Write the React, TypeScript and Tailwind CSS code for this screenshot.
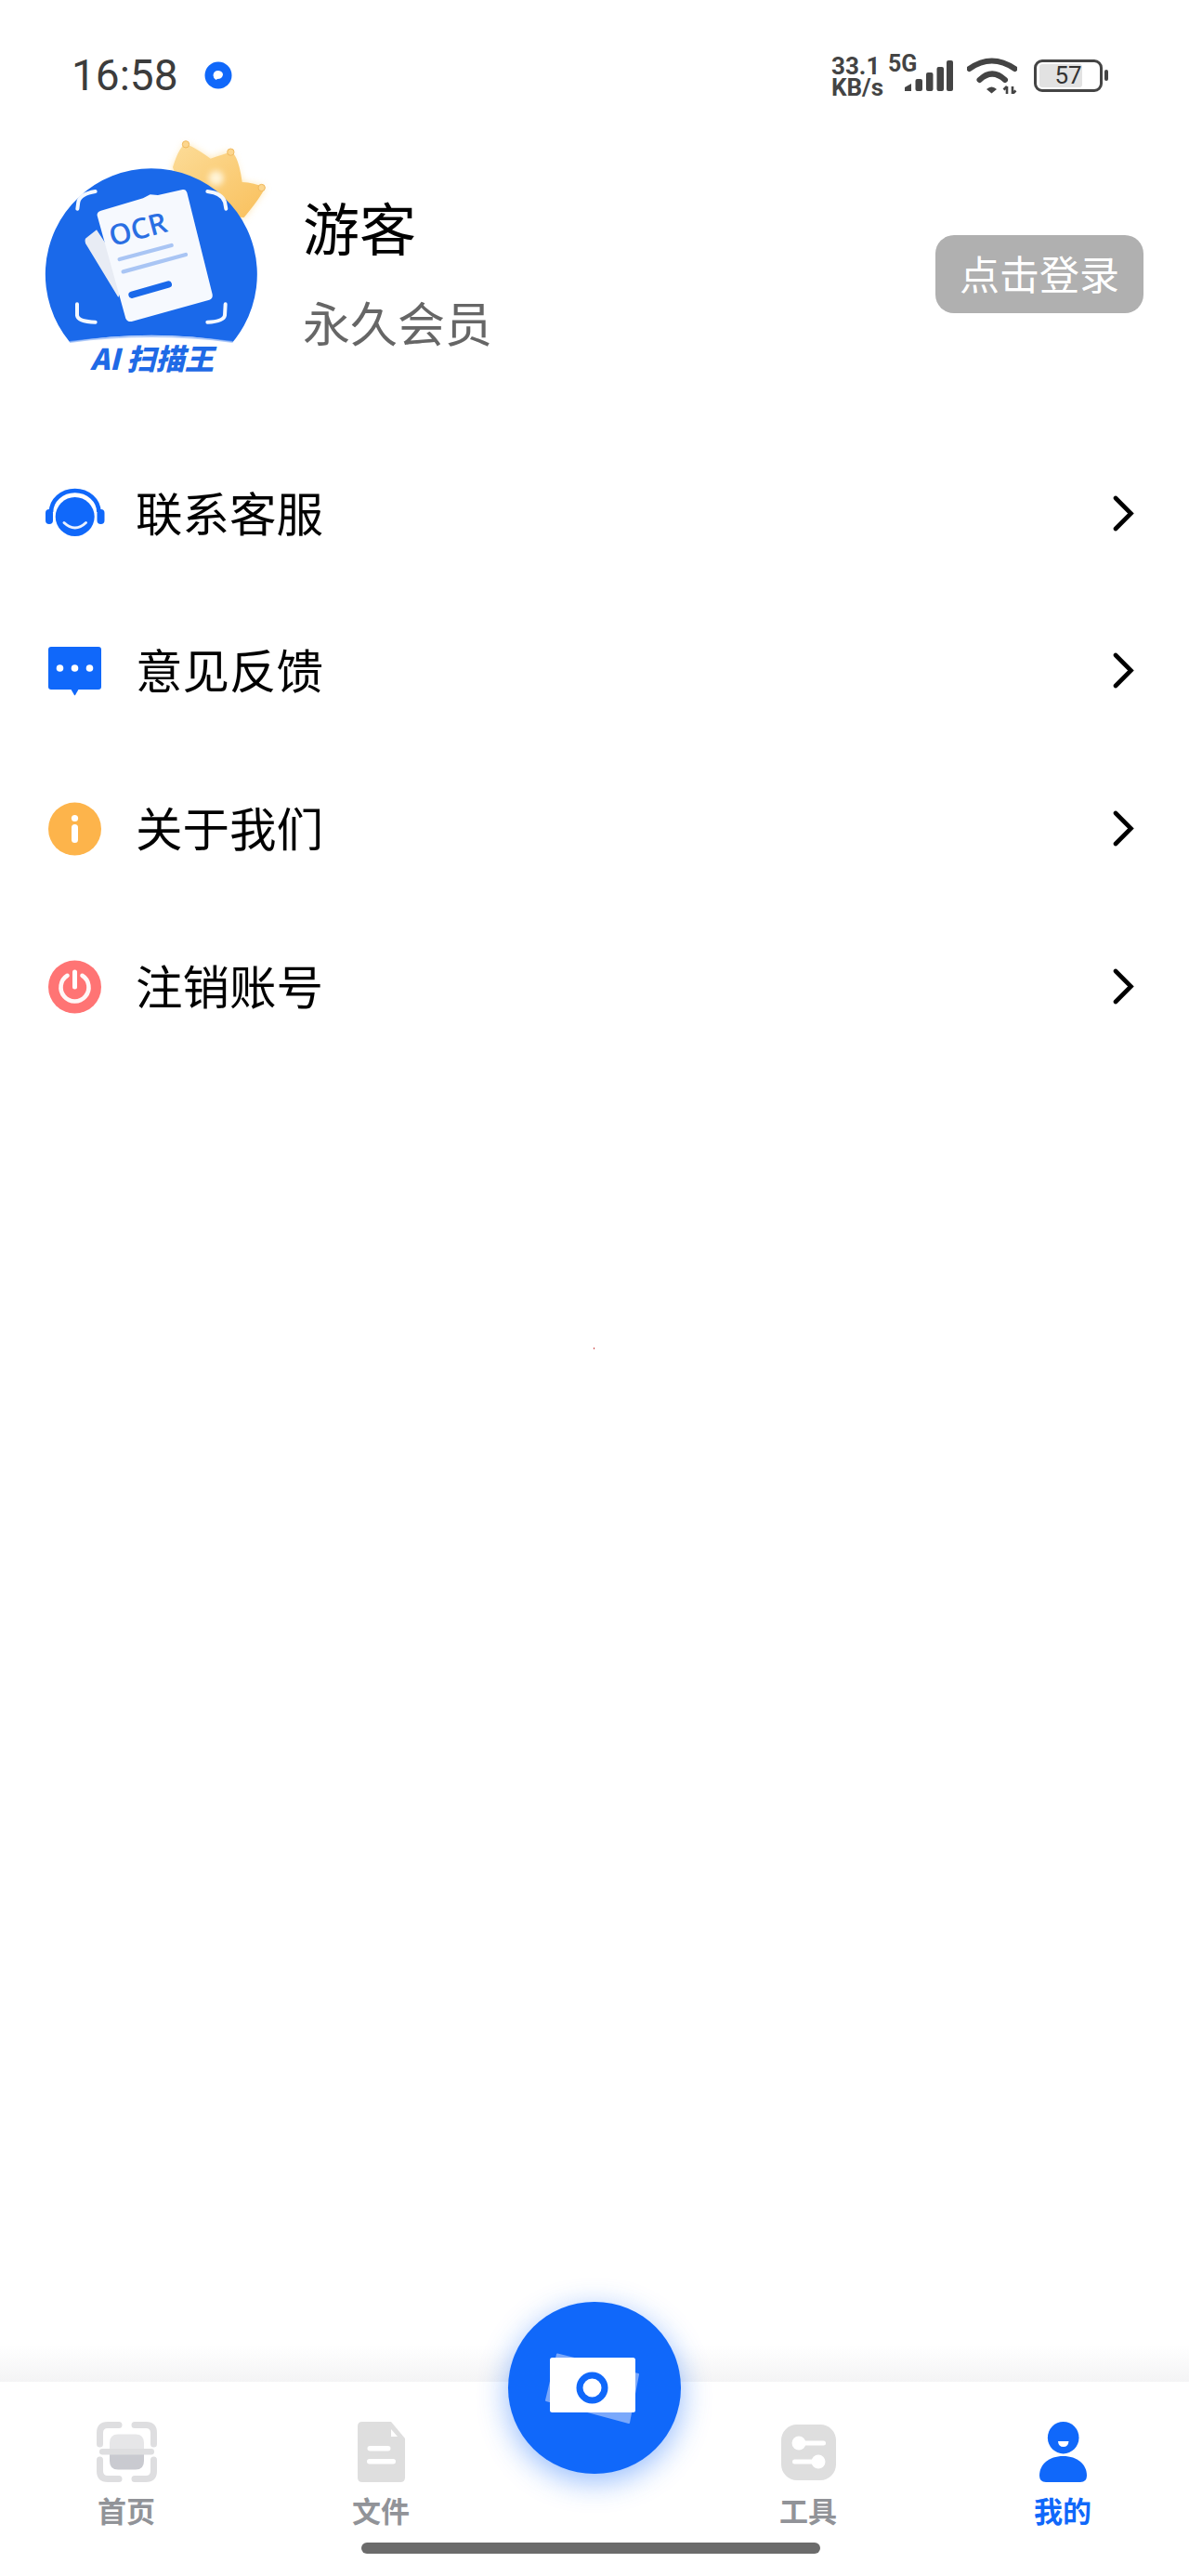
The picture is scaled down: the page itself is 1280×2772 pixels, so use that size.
import React from "react";

const BLUE = "#1068fa";
const cjk = { fontFamily: '"Noto Sans CJK SC", sans-serif' };

function Avatar() {
  return (
    <svg width="270" height="280" viewBox="0 0 810 840" className="shrink-0">
      <defs>
        <linearGradient id="crownG" x1="0" y1="0" x2="1" y2="1">
          <stop offset="0" stopColor="#fcdc98" />
          <stop offset="1" stopColor="#f9c05c" />
        </linearGradient>
        <filter id="glow" x="-30%" y="-30%" width="160%" height="160%">
          <feGaussianBlur stdDeviation="12" />
        </filter>
        <filter id="soft" x="-50%" y="-50%" width="200%" height="200%">
          <feGaussianBlur stdDeviation="9" />
        </filter>
      </defs>
      <path d="M470 150 L510 75 L590 125 L655 100 L690 200 L765 215 L695 315 L500 300 Z" fill="#fcd98a" opacity="0.8" filter="url(#glow)" />
      <path d="M468 150 Q490 80 510 76 Q530 80 590 122 Q630 110 655 100 Q680 110 692 198 Q730 200 766 216 Q750 250 698 312 L520 300 Z" fill="url(#crownG)" />
      <circle cx="510" cy="76" r="11" fill="#fcd68e" stroke="#f0b95e" strokeWidth="3" />
      <circle cx="655" cy="101" r="11" fill="#fcd68e" stroke="#f0b95e" strokeWidth="3" />
      <circle cx="755" cy="216" r="11" fill="#fcd68e" stroke="#f0b95e" strokeWidth="3" />
      <circle cx="608" cy="185" r="24" fill="#fff4d8" filter="url(#soft)" />
      <path d="M135 714 A342 342 0 1 1 662 714 Q400 670 135 714 Z" fill="#1a69ea" />
      <path d="M135 714 Q400 678 662 714" fill="none" stroke="#8fb4f5" strokeWidth="6" opacity="0.7" />
      <g fill="none" stroke="#f4f8ff" strokeWidth="12" strokeLinecap="round" strokeLinejoin="round">
        <path d="M160 284 L163 262 Q168 236 218 228" />
        <path d="M580 228 Q628 234 636 262 L640 284" />
        <path d="M159 592 L159 628 Q162 648 218 650" />
        <path d="M638 592 L636 628 Q632 648 580 650" />
      </g>
      <path d="M222 352 L186 380 Q182 392 190 402 L292 570 L320 500 Z" fill="#e8ecf4" />
      <path d="M236 290 L372 250 L395 238 L420 240 L500 222 Q510 220 514 232 L596 560 Q598 574 586 578 L335 648 Q322 650 316 638 L224 306 Q222 294 236 290 Z" fill="#f6f9fe" />
      <text x="0" y="0" transform="translate(272 406) rotate(-15)" fill="#2a6fe3" fontSize="92" fontWeight="600" fontFamily="Open Sans, sans-serif">OCR</text>
      <path d="M296 447 L464 402" stroke="#a9c5f4" strokeWidth="13" strokeLinecap="round" />
      <path d="M308 487 L510 432" stroke="#a9c5f4" strokeWidth="13" strokeLinecap="round" />
      <path d="M336 562 L454 528" stroke="#1a69ea" strokeWidth="22" strokeLinecap="round" />
      <text x="0" y="0" transform="translate(202 804) skewX(-14)" fill="#1f6ae6" fontSize="94" fontWeight="900" fontFamily='"Noto Sans CJK SC", sans-serif'>AI 扫描王</text>
    </svg>
  );
}

function Headset() {
  return (
    <svg width="80" height="80" viewBox="0 -2 80 80">
      <circle cx="40.7" cy="41" r="21" fill={BLUE} />
      <path d="M15 36 A25.7 23 0 0 1 66.4 36" fill="none" stroke={BLUE} strokeWidth="4.6" />
      <rect x="9" y="33" width="8" height="16" rx="4" fill={BLUE} />
      <rect x="64.5" y="33" width="8" height="16" rx="4" fill={BLUE} />
      <path d="M29 47.5 Q40.7 58.5 52.5 47.5" fill="none" stroke="#eaf1ff" strokeWidth="3" strokeLinecap="round" />
    </svg>
  );
}

function Chat() {
  return (
    <svg width="80" height="80" viewBox="0 0 80 80">
      <rect x="12" y="14" width="57" height="46" rx="3" fill={BLUE} />
      <path d="M36 59 H45 L41 66 Q40.5 66.5 40 66 Z" fill={BLUE} />
      <circle cx="24.5" cy="37" r="3.8" fill="#fff" />
      <circle cx="40.5" cy="37" r="3.8" fill="#fff" />
      <circle cx="56.5" cy="37" r="3.8" fill="#fff" />
    </svg>
  );
}

function Info() {
  return (
    <svg width="80" height="80" viewBox="0 0 80 80">
      <circle cx="40.5" cy="40" r="28.5" fill="#fdb44b" />
      <circle cx="40.5" cy="28.5" r="3.6" fill="#fff" />
      <rect x="37" y="35" width="7" height="20" rx="3.5" fill="#fff" />
    </svg>
  );
}

function Power() {
  return (
    <svg width="80" height="80" viewBox="0 0 80 80">
      <circle cx="40.5" cy="40" r="28.5" fill="#ff7474" />
      <path d="M32.5 27.8 A15 15 0 1 0 48.5 27.8" fill="none" stroke="#fff" strokeWidth="4.6" strokeLinecap="round" opacity="0.95" />
      <path d="M40.5 24 V40" fill="none" stroke="#fff" strokeWidth="5" strokeLinecap="round" />
    </svg>
  );
}

function Chevron() {
  return (
    <svg width="26" height="40" viewBox="0 0 26 40">
      <path d="M4 3 L20.5 19.5 L4 36" fill="none" stroke="#000" strokeWidth="4.6" strokeLinecap="round" strokeLinejoin="miter" />
    </svg>
  );
}

function HomeIcon() {
  return (
    <svg width="65" height="65" viewBox="0 0 65 65">
      <g fill="none" stroke="#dedee0" strokeWidth="7" strokeLinecap="round">
        <path d="M3.5 24 V12 Q3.5 3.5 12 3.5 H24" />
        <path d="M41 3.5 H53 Q61.5 3.5 61.5 12 V24" />
        <path d="M3.5 41 V53 Q3.5 61.5 12 61.5 H24" />
        <path d="M61.5 41 V53 Q61.5 61.5 53 61.5 H41" />
      </g>
      <path d="M14 32 V23 Q14 13.5 23 13.5 H42 Q51 13.5 51 23 V32 Z" fill="#e6e6e8" />
      <path d="M14 32 V42 Q14 51.5 23 51.5 H42 Q51 51.5 51 42 V32 Z" fill="#c9cad0" />
      <rect x="3" y="29" width="59" height="6.5" rx="3.2" fill="#dedee0" />
    </svg>
  );
}

function FileIcon() {
  return (
    <svg width="51" height="65" viewBox="0 0 51 65">
      <path d="M5 0 H36 L51 18 V60 Q51 65 46 65 H5 Q0 65 0 60 V5 Q0 0 5 0 Z" fill="#dedede" />
      <path d="M36 8 L43 16 H36 Z" fill="#fff" />
      <rect x="10.5" y="26" width="25" height="5.5" rx="2.7" fill="#fff" />
      <rect x="10" y="40" width="31" height="5.5" rx="2.7" fill="#fff" />
    </svg>
  );
}

function ToolIcon() {
  return (
    <svg width="59" height="60" viewBox="0 0 59 60">
      <rect x="0" y="0" width="59" height="60" rx="17" fill="#dedede" />
      <circle cx="19" cy="20" r="7.5" fill="#fff" />
      <rect x="19" y="17.5" width="29" height="5" rx="2.5" fill="#fff" />
      <circle cx="40" cy="40" r="7.5" fill="#fff" />
      <rect x="12" y="37.5" width="28" height="5" rx="2.5" fill="#fff" />
    </svg>
  );
}

function MeIcon() {
  return (
    <svg width="51" height="65" viewBox="0 0 51 65">
      <ellipse cx="25.7" cy="17.2" rx="16.8" ry="17.2" fill={BLUE} />
      <path d="M20 21 H31.5 Q31 27 25.7 27 Q20.5 27 20 21 Z" fill="#fff" />
      <path d="M0 58 C0 46 10 37 25.5 37 C41 37 51 46 51 58 Q51 65 44 65 H7 Q0 65 0 58 Z" fill={BLUE} />
    </svg>
  );
}

function Signal() {
  return (
    <svg width="52" height="33" viewBox="0 0 52 33" className="shrink-0">
      <path d="M0 29 L7 25 V33 H0 Z" fill="#444" />
      <rect x="11.5" y="20" width="7.5" height="13" rx="2" fill="#444" />
      <rect x="23" y="13" width="7.5" height="20" rx="2" fill="#444" />
      <rect x="34.5" y="7" width="7.5" height="26" rx="2" fill="#444" />
      <rect x="45" y="0" width="7" height="33" rx="2" fill="#444" />
    </svg>
  );
}

function Wifi() {
  return (
    <svg width="54" height="40" viewBox="0 0 54 40" className="shrink-0">
      <path d="M2.5 13 Q26.5 -4 51.5 13" fill="none" stroke="#444" strokeWidth="6" strokeLinecap="round" />
      <path d="M13.5 25 Q27 12 41 25" fill="none" stroke="#444" strokeWidth="6" strokeLinecap="round" />
      <path d="M21 35 Q26.5 30 32 35 L26.5 39.5 Z" fill="#444" />
      <path d="M43 40 V32 M39.5 35.5 L43 32" fill="none" stroke="#444" strokeWidth="2.6" />
      <path d="M49 32 V40 M52.5 36.5 L49 40" fill="none" stroke="#444" strokeWidth="2.6" />
    </svg>
  );
}

function Battery() {
  return (
    <div className="flex items-center shrink-0">
      <div className="relative w-[74px] h-[35px] rounded-[9px] border-[3px] border-[#444] flex items-center justify-center">
        <div className="absolute left-[3px] top-[2px] bottom-[2px] w-[46px] rounded-[3px] bg-[#e2e2e2]" />
        <span className="relative text-[26px] leading-none text-[#333]" style={{ fontFamily: "Roboto, sans-serif" }}>57</span>
      </div>
      <div className="ml-[2px] w-[4px] h-[12px] rounded-full bg-[#444]" />
    </div>
  );
}

function Row({ icon, label }: { icon: React.ReactNode; label: string }) {
  return (
    <div className="h-[169.67px] flex items-center pl-[40px] pr-[57px]">
      {icon}
      <span className="ml-[26px] mb-[6px] text-[50.5px] leading-none text-black" style={cjk}>{label}</span>
      <span className="ml-auto flex"><Chevron /></span>
    </div>
  );
}

function Tab({ icon, label, active }: { icon: React.ReactNode; label: string; active?: boolean }) {
  return (
    <div className="flex flex-col items-center">
      <div className="h-[65px] flex items-center justify-center">{icon}</div>
      <span
        className={`mt-[13px] text-[31px] leading-[34px] font-bold ${active ? "text-[#1068fa]" : "text-[#919398]"}`}
        style={cjk}
      >
        {label}
      </span>
    </div>
  );
}

export default function App() {
  return (
    <div className="relative w-[1280px] h-[2772px] bg-white flex flex-col overflow-hidden">
      {/* status bar */}
      <div className="h-[130px] shrink-0 pt-[60px]">
        <div className="h-[42px] flex items-center pl-[77px] pr-[87px] text-[#444]">
          <span className="text-[46px] leading-none text-[#3c3c3c]" style={{ fontFamily: "Roboto, sans-serif" }}>16:58</span>
          <svg width="30" height="30" viewBox="0 0 30 30" className="ml-[28px]">
            <circle cx="15" cy="15" r="14.5" fill={BLUE} />
            <path d="M9.5 15 Q10 10 15 10 Q20 10.5 20 14.5 Q19 19 14 19 L12.5 20 Q9.5 18 9.5 15 Z" fill="#fff" />
          </svg>
          <div className="ml-auto flex items-center">
            <div className="w-[61px] text-[26px] leading-[23px] font-bold mt-[3px]" style={{ fontFamily: "Roboto, sans-serif" }}>
              <div>33.1</div>
              <div>KB/s</div>
            </div>
            <div className="w-[18px] self-start mt-[2px] text-[25px] leading-[20px] font-bold whitespace-nowrap" style={{ fontFamily: "Roboto, sans-serif" }}>5G</div>
            <Signal />
            <div className="ml-[15px] flex"><Wifi /></div>
            <div className="ml-[18px] flex"><Battery /></div>
          </div>
        </div>
      </div>

      {/* profile */}
      <div className="h-[280px] shrink-0 flex items-start pl-[30px] pr-[49px]">
        <Avatar />
        <div className="ml-[26px] flex flex-col pt-[79px]" style={cjk}>
          <span className="text-[61px] leading-[70px] text-black">游客</span>
          <span className="mt-[37px] text-[51px] leading-[60px] text-[#666]">永久会员</span>
        </div>
        <div className="ml-auto mt-[123px] w-[224px] h-[84px] pb-[4px] rounded-[20px] bg-[#b0b0b0] flex items-center justify-center text-[43px] text-white" style={cjk}>
          点击登录
        </div>
      </div>

      {/* menu */}
      <div className="mt-[58px] shrink-0">
        <Row icon={<Headset />} label="联系客服" />
        <Row icon={<Chat />} label="意见反馈" />
        <Row icon={<Info />} label="关于我们" />
        <Row icon={<Power />} label="注销账号" />
      </div>

      <div className="flex-1" />

      {/* tab bar */}
      <div className="h-[40px] shrink-0 bg-gradient-to-b from-white to-[#f4f4f5]" />
      <div className="h-[209px] shrink-0 bg-white pt-[43px] flex flex-col">
        <div className="grid grid-cols-[272px_276px_184px_276px_272px]">
          <Tab icon={<HomeIcon />} label="首页" />
          <Tab icon={<FileIcon />} label="文件" />
          <div />
          <Tab icon={<ToolIcon />} label="工具" />
          <Tab icon={<MeIcon />} label="我的" active />
        </div>
        <div className="mt-[18px] self-center w-[494px] h-[12px] rounded-full bg-[#6b6b6b] translate-x-[-4px]" />
      </div>

      {/* tiny speck */}
      <div className="absolute left-[639px] top-[1450px] w-[1px] h-[2px] bg-[#d05050]" />

      {/* floating camera button */}
      <div className="absolute left-[547px] top-[2477px] w-[186px] h-[185px] rounded-full bg-[#1068fa] shadow-[0_8px_32px_rgba(16,104,250,0.45)] flex items-center justify-center">
        <svg width="140" height="100" viewBox="0 0 140 100">
          <path d="M30 13.5 L117 35 L107 87 L18 63 Z" fill="#7aa8fb" stroke="#7aa8fb" strokeWidth="2" strokeLinejoin="round" />
          <rect x="22" y="17" width="92" height="59" rx="2.5" fill="#fff" />
          <circle cx="67.5" cy="49.5" r="13.5" fill="none" stroke="#1068fa" strokeWidth="7" />
        </svg>
      </div>
    </div>
  );
}
